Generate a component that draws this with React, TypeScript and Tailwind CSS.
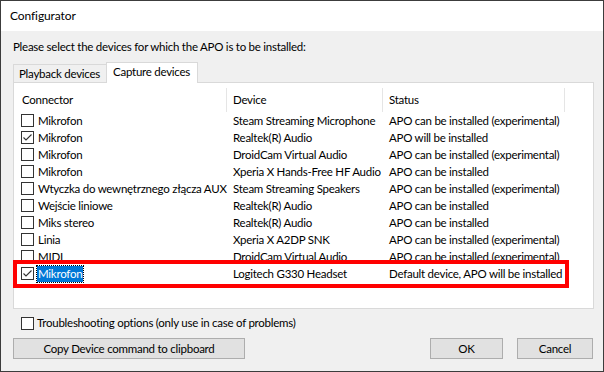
import React from "react";

const rows: { name: string; device: string; status: string; checked?: boolean; selected?: boolean }[] = [
  { name: "Mikrofon", device: "Steam Streaming Microphone", status: "APO can be installed (experimental)" },
  { name: "Mikrofon", device: "Realtek(R) Audio", status: "APO will be installed", checked: true },
  { name: "Mikrofon", device: "DroidCam Virtual Audio", status: "APO can be installed (experimental)" },
  { name: "Mikrofon", device: "Xperia X Hands-Free HF Audio", status: "APO can be installed" },
  { name: "Wtyczka do wewnętrznego złącza AUX", device: "Steam Streaming Speakers", status: "APO can be installed (experimental)" },
  { name: "Wejście liniowe", device: "Realtek(R) Audio", status: "APO can be installed" },
  { name: "Miks stereo", device: "Realtek(R) Audio", status: "APO can be installed" },
  { name: "Linia", device: "Xperia X A2DP SNK", status: "APO can be installed (experimental)" },
  { name: "MIDI", device: "DroidCam Virtual Audio", status: "APO can be installed (experimental)" },
  { name: "Mikrofon", device: "Logitech G330 Headset", status: "Default device, APO will be installed", checked: true, selected: true },
];

function Check({ checked }: { checked?: boolean }) {
  return (
    <div className="w-[13px] h-[13px] border border-[#333333] bg-white shrink-0 flex items-center justify-center">
      {checked && (
        <svg width="11" height="11" viewBox="0 0 11 11">
          <path d="M1.5 5.5 L4 8 L9.5 2.5" fill="none" stroke="#333333" strokeWidth="1.1" />
        </svg>
      )}
    </div>
  );
}

export default function App() {
  return (
    <div
      className="relative w-[604px] h-[372px] border border-[#3c3c3c] bg-[#f0f0f0] flex flex-col text-black text-[11.5px] tracking-[-0.25px]"
      style={{ fontFamily: 'Lato, "Noto Sans", sans-serif' }}
    >
      <div className="h-[30px] bg-white flex items-center pl-[9px] text-[12px] tracking-[-0.1px]">Configurator</div>
      <div className="flex flex-col pl-[11px] pt-[8px] whitespace-nowrap">
        <div className="leading-[16px] pl-[1px]">Please select the devices for which the APO is to be installed:</div>
        <div className="flex h-[21px] mt-[7px] pl-[1px]">
          <div className="self-end h-[19px] w-[93px] border-l border-t border-[#d9d9d9] bg-[#f0f0f0] flex items-center pl-[5px] leading-[16px]">
            Playback devices
          </div>
          <div className="relative z-10 h-[21px] w-[92px] border-x border-t border-[#d9d9d9] bg-white flex items-center pl-[6px] pb-[2px] leading-[16px]">
            Capture devices
          </div>
        </div>
        <div className="-mt-px ml-[1px] w-[581px] h-[227px] border border-[#d9d9d9] bg-white pt-[5px] pl-[2px]">
          <div className="flex h-[24px] items-center leading-[16px]">
            <div className="w-[211px] h-full border-r border-[#e5e5e5] flex items-center pl-[6px] pb-[1px]">Connector</div>
            <div className="w-[156px] h-full border-r border-[#e5e5e5] flex items-center pl-[6px] pb-[1px]">Device</div>
            <div className="w-[182px] h-full border-r border-[#e5e5e5] flex items-center pl-[6px] pb-[1px]">Status</div>
          </div>
          {rows.map((r, i) => (
            <div key={i} className="flex h-[17px] items-center leading-[16px] whitespace-nowrap">
              <div className="w-[211px] flex items-center pl-[5px] gap-[3px]">
                <Check checked={r.checked} />
                {r.selected ? (
                  <span className="bg-[#0078d7] text-white px-[1px] outline outline-1 outline-dotted outline-[#000000]">
                    {r.name}
                  </span>
                ) : (
                  <span className="pl-[1px]">{r.name}</span>
                )}
              </div>
              <div className="w-[156px] pl-[6px]">{r.device}</div>
              <div className="w-[182px] pl-[6px]">{r.status}</div>
            </div>
          ))}
        </div>
        <div className="flex items-center h-[16px] mt-[6px] pl-[9px] gap-[3px] leading-[16px]">
          <Check />
          <span>Troubleshooting options (only use in case of problems)</span>
        </div>
        <div className="flex mt-[7px] pl-[1px]">
          <button className="w-[232px] h-[21px] border border-[#adadad] bg-[#e1e1e1] leading-[16px]">
            Copy Device command to clipboard
          </button>
          <button className="ml-[185px] w-[73px] h-[21px] border border-[#adadad] bg-[#e1e1e1] leading-[16px]">OK</button>
          <button className="ml-[14px] w-[76px] h-[21px] border border-[#adadad] bg-[#e1e1e1] leading-[16px]">Cancel</button>
        </div>
      </div>
      <div className="absolute left-[12px] top-[259px] w-[556px] h-[28px] border-4 border-[#ff0000]" />
    </div>
  );
}
